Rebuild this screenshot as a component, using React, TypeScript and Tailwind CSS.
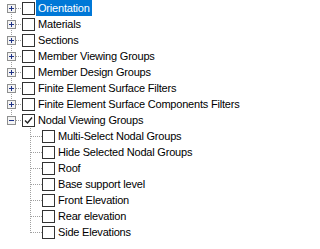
import React from "react";

type Node = { label: string; checked?: boolean; expanded?: boolean; selected?: boolean; children?: string[] };

const nodes: Node[] = [
  { label: "Orientation", selected: true },
  { label: "Materials" },
  { label: "Sections" },
  { label: "Member Viewing Groups" },
  { label: "Member Design Groups" },
  { label: "Finite Element Surface Filters" },
  { label: "Finite Element Surface Components Filters" },
  {
    label: "Nodal Viewing Groups",
    checked: true,
    expanded: true,
    children: [
      "Multi-Select Nodal Groups",
      "Hide Selected Nodal Groups",
      "Roof",
      "Base support level",
      "Front Elevation",
      "Rear elevation",
      "Side Elevations",
    ],
  },
];

function CheckBox({ checked }: { checked?: boolean }) {
  return (
    <div className="relative h-[13px] w-[13px] shrink-0 border border-[#333333] bg-white">
      {checked && (
        <svg className="absolute left-0 top-0" width="11" height="11" viewBox="0 0 11 11">
          <path d="M2 5.5 L4.5 8 L9 2.5" fill="none" stroke="#222" strokeWidth="1.4" />
        </svg>
      )}
    </div>
  );
}

function Label({ text, selected }: { text: string; selected?: boolean }) {
  return (
    <span
      className={
        "flex h-[16px] items-center whitespace-nowrap px-[2px] text-[11px] leading-none tracking-[-0.2px] " +
        (selected ? "bg-[#0078d7] text-white" : "text-black")
      }
    >
      {text}
    </span>
  );
}

function TopGutter({ first, last, expanded }: { first: boolean; last: boolean; expanded?: boolean }) {
  return (
    <svg width="22" height="16" className="shrink-0" shapeRendering="crispEdges">
      <line x1="11.5" y1={first ? 8 : 0} x2="11.5" y2={last ? 4 : 16} stroke="#a0a0a0" strokeDasharray="1 1" />
      <line x1="16" y1="8.5" x2="22" y2="8.5" stroke="#a0a0a0" strokeDasharray="1 1" />
      <rect x="7.5" y="4.5" width="8" height="8" fill="#f4f4f4" stroke="#8e8f8f" />
      <line x1="9" y1="8.5" x2="14" y2="8.5" stroke="#1e3287" />
      {!expanded && <line x1="11.5" y1="6" x2="11.5" y2="11" stroke="#1e3287" />}
    </svg>
  );
}

function ChildGutter({ last }: { last: boolean }) {
  return (
    <svg width="42" height="16" className="shrink-0" shapeRendering="crispEdges">
      <line x1="30.5" y1="0" x2="30.5" y2={last ? 9 : 16} stroke="#a0a0a0" strokeDasharray="1 1" />
      <line x1="31" y1="8.5" x2="42" y2="8.5" stroke="#a0a0a0" strokeDasharray="1 1" />
    </svg>
  );
}

export default function App() {
  return (
    <div className="h-[249px] w-[320px] overflow-hidden bg-white font-['Liberation_Sans',Arial,sans-serif]">
      {nodes.map((n, i) => (
        <React.Fragment key={n.label}>
          <div className="flex h-[16px] items-center">
            <TopGutter first={i === 0} last={i === nodes.length - 1} expanded={n.expanded} />
            <CheckBox checked={n.checked} />
            <div className="ml-[1px]">
              <Label text={n.label} selected={n.selected} />
            </div>
          </div>
          {n.expanded &&
            n.children?.map((c, j) => (
              <div key={c} className="flex h-[16px] items-center">
                <ChildGutter last={j === (n.children?.length ?? 0) - 1} />
                <CheckBox />
                <div className="ml-[1px]">
                  <Label text={c} />
                </div>
              </div>
            ))}
        </React.Fragment>
      ))}
    </div>
  );
}
